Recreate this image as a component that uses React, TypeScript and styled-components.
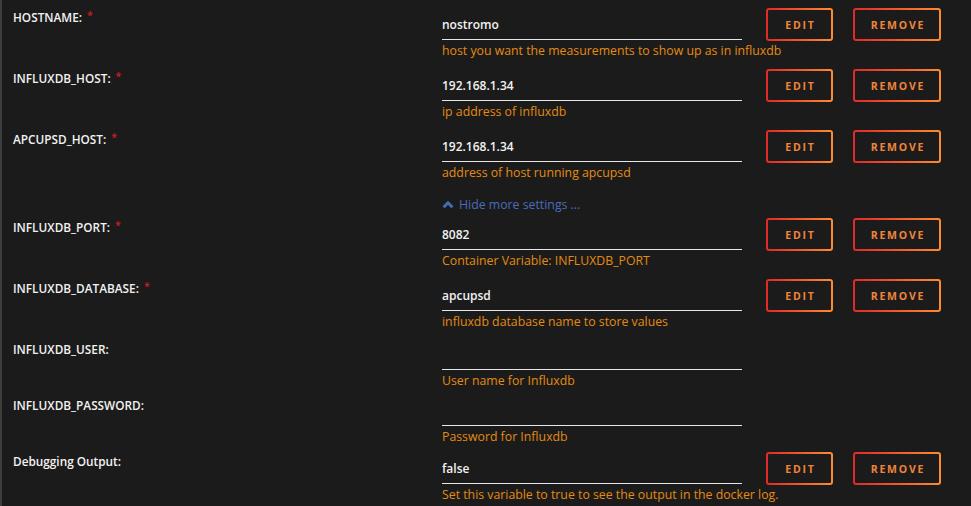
import React from "react";
import styled, { createGlobalStyle } from "styled-components";

const GlobalStyle = createGlobalStyle`
  html, body {
    margin: 0;
    padding: 0;
    background: #1c1b1b;
  }
  body {
    font-family: "Open Sans", "Liberation Sans", Arial, sans-serif;
    color: #f2f2f2;
  }
`;

type Setting = {
  name: string;
  value: string;
  description: string;
  required?: boolean;
  actions?: boolean;
};

const topSettings: Setting[] = [
  {
    name: "HOSTNAME:",
    value: "nostromo",
    description: "host you want the measurements to show up as in influxdb",
    required: true,
    actions: true,
  },
  {
    name: "INFLUXDB_HOST:",
    value: "192.168.1.34",
    description: "ip address of influxdb",
    required: true,
    actions: true,
  },
  {
    name: "APCUPSD_HOST:",
    value: "192.168.1.34",
    description: "address of host running apcupsd",
    required: true,
    actions: true,
  },
];

const moreSettings: Setting[] = [
  {
    name: "INFLUXDB_PORT:",
    value: "8082",
    description: "Container Variable: INFLUXDB_PORT",
    required: true,
    actions: true,
  },
  {
    name: "INFLUXDB_DATABASE:",
    value: "apcupsd",
    description: "influxdb database name to store values",
    required: true,
    actions: true,
  },
  {
    name: "INFLUXDB_USER:",
    value: "",
    description: "User name for Influxdb",
  },
  {
    name: "INFLUXDB_PASSWORD:",
    value: "",
    description: "Password for Influxdb",
  },
  {
    name: "Debugging Output:",
    value: "false",
    description: "Set this variable to true to see the output in the docker log.",
    actions: true,
  },
];

export default function App() {
  return (
    <>
      <GlobalStyle />
      <Panel>
        {topSettings.map((s) => (
          <SettingRow key={s.name} setting={s} />
        ))}
        <HideRow>
          <HideLink>
            <svg width="12" height="9" viewBox="0 0 12 9">
              <polyline
                points="1.6,7.2 6,2.8 10.4,7.2"
                fill="none"
                stroke="#486dba"
                strokeWidth="3"
              />
            </svg>
            Hide more settings ...
          </HideLink>
        </HideRow>
        {moreSettings.map((s) => (
          <SettingRow key={s.name} setting={s} />
        ))}
      </Panel>
    </>
  );
}

function SettingRow({ setting }: { setting: Setting }) {
  const actions = !!setting.actions;
  return (
    <Row $actions={actions}>
      <Label>
        {setting.name}
        {setting.required && <Required>*</Required>}
      </Label>
      <Field $actions={actions}>
        <Input>{setting.value}</Input>
        <Description>{setting.description}</Description>
      </Field>
      {actions && (
        <Actions>
          <ActionButton $width={67}>Edit</ActionButton>
          <ActionButton $width={88}>Remove</ActionButton>
        </Actions>
      )}
    </Row>
  );
}

// Styled Components
const Panel = styled.div`
  min-height: 506px;
  border-left: 2px solid #3d3d3d;
  box-sizing: border-box;
`;

const Row = styled.div<{ $actions: boolean }>`
  display: grid;
  grid-template-columns: 440px 300px auto;
  align-items: start;
  height: ${(p) => (p.$actions ? 61 : 56)}px;
`;

const Label = styled.div`
  padding: 9px 0 0 11px;
  font-size: 11.8px;
  line-height: 16px;
  font-weight: 600;
  color: #f2f2f2;
`;

const Required = styled.span`
  color: #d21f1f;
  font-size: 10.5px;
  margin-left: 5px;
  position: relative;
  top: -3px;
`;

const Field = styled.div<{ $actions: boolean }>`
  padding-top: ${(p) => (p.$actions ? 11 : 9)}px;
`;

const Input = styled.div`
  height: 28px;
  line-height: 28px;
  border-bottom: 1px solid #e6e6e6;
  font-size: 12px;
  font-weight: 600;
  color: #f2f2f2;
`;

const Description = styled.div`
  margin-top: 2px;
  font-size: 12.3px;
  line-height: 17px;
  color: #e38b12;
  white-space: nowrap;
`;

const Actions = styled.div`
  display: flex;
  gap: 20px;
  padding: 8px 0 0 24px;
`;

const ActionButton = styled.button<{ $width: number }>`
  width: ${(p) => p.$width}px;
  height: 33px;
  box-sizing: border-box;
  border: 2px solid transparent;
  border-radius: 3px;
  background: linear-gradient(#1c1b1b, #1c1b1b) padding-box,
    linear-gradient(90deg, #e22828, #ff8c2f) border-box;
  color: #f0853a;
  font-family: "Open Sans", "Liberation Sans", Arial, sans-serif;
  font-size: 10.5px;
  font-weight: 700;
  letter-spacing: 1.8px;
  text-transform: uppercase;
  padding: 0 0 0 2px;
  cursor: pointer;
`;

const HideRow = styled.div`
  height: 27px;
  box-sizing: border-box;
  padding: 9px 0 0 440px;
`;

const HideLink = styled.a`
  display: inline-flex;
  align-items: center;
  gap: 5px;
  font-size: 12.3px;
  line-height: 16px;
  color: #486dba;
  cursor: pointer;
`;
